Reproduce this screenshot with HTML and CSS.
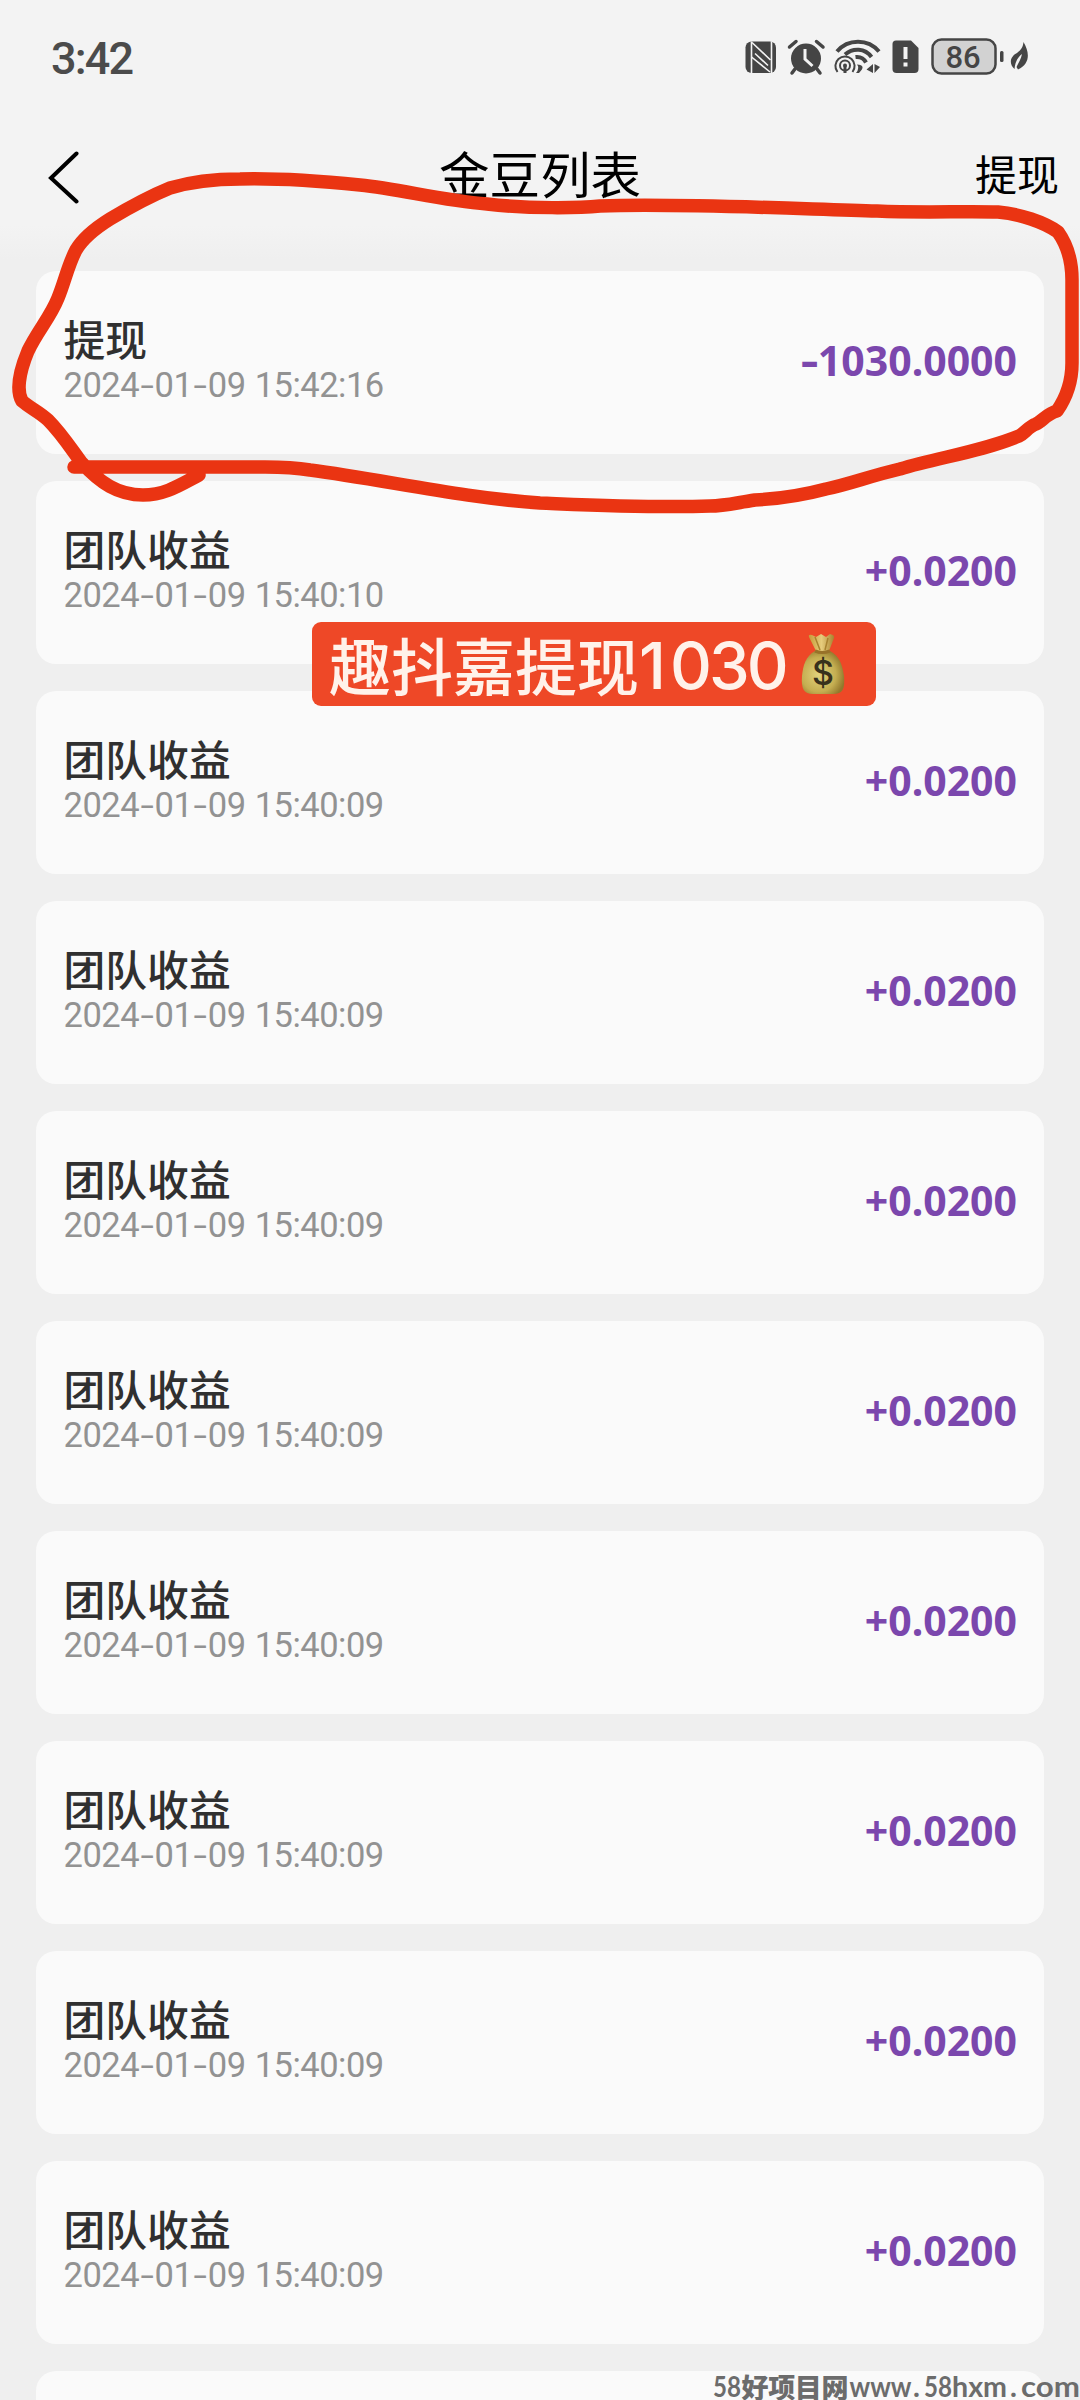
FILE: index.html
```html
<!DOCTYPE html>
<html lang="zh-CN">
<head>
<meta charset="utf-8">
<title>金豆列表</title>
<link rel="stylesheet" href="styles.css">
</head>
<body>
<main class="screen">
  <div class="status">
    <span class="time">3:42</span>
    <svg class="status-icons" viewBox="20 16 294 42" width="294" height="42" fill="none" stroke="#454545">
      <rect x="25.5" y="21.5" width="30.5" height="31.5" rx="6" fill="#454545" stroke="none"/>
      <path d="M31.500 53V21.500M51.500 53V21.500" stroke="#f3f3f3" stroke-width="1.600"/>
      <path d="M32 22.500L50.500 40M35 33.500L48 45.500M31.500 37L50 52" stroke="#f3f3f3" stroke-width="1.600"/>
      <circle cx="86" cy="38.500" r="15" fill="#454545" stroke="none"/>
      <path d="M69.500 27L76 21.500M96.500 21.500L103 27M75 49L72 53M97 49L100 53" stroke-width="3.500" stroke-linecap="round"/>
      <path d="M85 29V39L92.500 46" stroke="#f3f3f3" stroke-width="3"/>
      <g stroke-width="4">
        <path d="M117 31.500C128 18.500 148 18.500 159 31.500"/>
        <path d="M125 34.500C133 27.500 145 28 151.500 37"/>
        <path d="M135.500 37C140 36.500 144 38.500 146 42.500"/>
      </g>
      <circle cx="125" cy="45.500" r="5" stroke-width="2"/>
      <path d="M117.500 52A9.600 9.600 0 1 1 132.500 52" stroke-width="2"/>
      <circle cx="125" cy="45.500" r="2" fill="#454545" stroke="none"/>
      <path d="M125 46V53" stroke-width="3"/>
      <path d="M137 44.500Q147 45 139 53H136Q140 48 137 44.500ZM153 44V53L146.500 49.500ZM154.500 44V53L160 47Z" fill="#454545" stroke="none"/>
      <path d="M176 20.500H191L198.500 28V49Q198.500 53 194.500 53H176.500Q172.500 53 172.500 49V24Q172.500 20.500 176 20.500Z" fill="#454545" stroke="none"/>
      <path d="M185.500 27V39M185.500 42.500V46.500" stroke="#f3f3f3" stroke-width="4"/>
      <rect x="212.500" y="19.500" width="63" height="34" rx="9" fill="#d2d2d2" stroke-width="2.500"/>
      <text class="battery-text" x="243" y="48" text-anchor="middle">86</text>
      <rect x="280" y="31" width="3.500" height="11" rx="1.500" fill="#454545" stroke="none"/>
      <path d="M303.500 22C310 33 310 44 298 49.500L296.500 47C299 42 301 39 302 34C298 37 295 42 294.500 49C288 43 291 36 297 33C301 30 303 27 303.500 22Z" fill="#454545" stroke="none"/>
    </svg>
  </div>
  <header class="nav">
    <svg class="back" viewBox="0 0 32 54" width="32" height="54"><path d="M28.500 3.500L3 28L28.500 51.500" fill="none" stroke="#000" stroke-width="4" stroke-linecap="round"/></svg>
    <h1 class="title">金豆列表</h1>
    <span class="action">提现</span>
  </header>
  <section class="list">
    <article class="card"><div><h2 class="name">提现</h2><time class="date">2024<i>-</i>01<i>-</i>09 15:42:16</time></div><b class="amount"><i>-</i>1030.0000</b></article>
    <article class="card"><div><h2 class="name">团队收益</h2><time class="date">2024<i>-</i>01<i>-</i>09 15:40:10</time></div><b class="amount">+0.0200</b></article>
    <article class="card"><div><h2 class="name">团队收益</h2><time class="date">2024<i>-</i>01<i>-</i>09 15:40:09</time></div><b class="amount">+0.0200</b></article>
    <article class="card"><div><h2 class="name">团队收益</h2><time class="date">2024<i>-</i>01<i>-</i>09 15:40:09</time></div><b class="amount">+0.0200</b></article>
    <article class="card"><div><h2 class="name">团队收益</h2><time class="date">2024<i>-</i>01<i>-</i>09 15:40:09</time></div><b class="amount">+0.0200</b></article>
    <article class="card"><div><h2 class="name">团队收益</h2><time class="date">2024<i>-</i>01<i>-</i>09 15:40:09</time></div><b class="amount">+0.0200</b></article>
    <article class="card"><div><h2 class="name">团队收益</h2><time class="date">2024<i>-</i>01<i>-</i>09 15:40:09</time></div><b class="amount">+0.0200</b></article>
    <article class="card"><div><h2 class="name">团队收益</h2><time class="date">2024<i>-</i>01<i>-</i>09 15:40:09</time></div><b class="amount">+0.0200</b></article>
    <article class="card"><div><h2 class="name">团队收益</h2><time class="date">2024<i>-</i>01<i>-</i>09 15:40:09</time></div><b class="amount">+0.0200</b></article>
    <article class="card"><div><h2 class="name">团队收益</h2><time class="date">2024<i>-</i>01<i>-</i>09 15:40:09</time></div><b class="amount">+0.0200</b></article>
    <article class="card"></article>
  </section>

  <svg class="marker" viewBox="0 0 1080 520" width="1080" height="520">
    <path d="M199 475C180 485 165 495 143 495C118 495 100 483 81 462C70 447 61 433 48 420C38 411 30 408 22 401C17 392 18 375 28 351C38 330 50 318 58 298C65 281 68 265 76 250C83 238 94 229 110 219C130 207 148 197 170 188C190 182 215 179 240 179C280 178 320 181 360 185C400 189 440 200 487 204C530 209 580 208 600 206C680 203 800 209 877 211C920 213 965 211 998 212C1020 214 1044 222 1058 232C1068 246 1072 262 1072 280V363C1072 382 1066 398 1057 411C1048 413 1042 421 1036 424C1028 427 1025 433 1019 436C980 452 940 457 900 469C870 476 850 484 826 489C800 496 775 499 755 500C735 503 725 506 710 506C650 508 590 505 540 503C465 498 385 480 310 470C298 468 285 467 265 467H74"/>
  </svg>

  <div class="label">
    <span>趣抖嘉提现</span><span class="label-num"><span class="one">1</span>030</span>
    <svg class="bag" viewBox="0 0 44 62" width="44" height="62">
      <defs>
        <radialGradient id="gold" cx=".4" cy=".55" r=".62"><stop offset="0" stop-color="#e2d27c"/><stop offset=".65" stop-color="#c4ae51"/><stop offset="1" stop-color="#92782c"/></radialGradient>
        <linearGradient id="neck"><stop offset="0" stop-color="#c79b38"/><stop offset=".5" stop-color="#e6cc7c"/><stop offset="1" stop-color="#a9822e"/></linearGradient>
      </defs>
      <path d="M15 18L8 4Q7 1 11 2L15 4L20 1L25 4L29 1Q34 2 33 5L28 18Z" fill="url(#neck)"/>
      <path d="M14 4L19 17M27 5L24 17" stroke="#a8822f" stroke-width="1.500"/>
      <path d="M14 18C5 23 2 32 1 43C0 56 3 61 12 61H32C42 61 44 56 43 43C41 30 38 23 29 18Z" fill="url(#gold)"/>
      <path d="M14 18Q21 21 29 18" stroke="#987229" stroke-width="3" fill="none"/>
      <text class="dollar" x="22" y="52" text-anchor="middle">$</text>
    </svg>
  </div>

  <svg class="watermark" viewBox="0 0 368 29" width="368" height="29">
    <text x="1" y="26" textLength="28" lengthAdjust="spacingAndGlyphs">58</text>
    <text class="cjk" x="29.500" y="26.500" textLength="107">好项目网</text>
    <text x="137.500" y="26" textLength="62" lengthAdjust="spacingAndGlyphs">www</text>
    <text x="201" y="26">.</text>
    <text x="212" y="26" textLength="28" lengthAdjust="spacingAndGlyphs">58</text>
    <text x="240" y="26" textLength="55" lengthAdjust="spacingAndGlyphs">hxm</text>
    <text x="298" y="26">.</text>
    <text x="309" y="26" textLength="59" lengthAdjust="spacingAndGlyphs">com</text>
  </svg>
</main>
</body>
</html>
```
FILE: styles.css
```css
* { box-sizing: border-box; }
body { margin: 0; background: #efefef; font-family: "Noto Sans CJK SC", sans-serif; }
.screen { position: relative; width: 1080px; height: 2400px; overflow: hidden; background: linear-gradient(#f3f3f3 0, #f3f3f3 225px, #efefef 260px); }
.status { height: 116px; padding: 36px 46px 38px 51px; display: flex; justify-content: space-between; align-items: center; }
.time { padding-top: 3px; font: 500 45px/42px Roboto, sans-serif; letter-spacing: -1.800px; color: #4b4b4b; }
.status-icons { display: block; }
.battery-text { font: 500 31px Roboto, sans-serif; fill: #454545; stroke: none; }
.nav { height: 118px; padding: 0 21px 0 48px; display: grid; grid-template-columns: 180px 1fr 207px; align-items: center; }
.back { display: block; margin-top: 4px; }
.title { margin: 0; text-align: center; font-size: 50.500px; line-height: 76px; padding-bottom: 6px; font-weight: 400; color: #000; }
.action { text-align: right; font-size: 42px; line-height: 64px; padding-bottom: 5px; color: #000; }
.list { display: flex; flex-direction: column; gap: 27px; padding: 36.500px 36px 0; }
.card { flex: none; height: 183px; padding: 0 27px 0 27.500px; border-radius: 20px; background: #fafafa; display: flex; justify-content: space-between; align-items: center; }
.name { margin: -3px 0 0; font-size: 41.800px; line-height: 47px; font-weight: 500; color: #303030; }
.date { display: block; margin-top: 1px; font: 400 34.500px/44px Roboto, sans-serif; letter-spacing: -0.500px; word-spacing: 1px; color: #929292; }
.date i { display: inline-block; width: 15.500px; font-style: normal; text-align: center; transform: scaleX(1.400); }
.amount { padding-bottom: 4px; font: 700 41px/56px "Noto Sans", sans-serif; color: #7b47ad; }
.amount i { display: inline-block; width: 17px; font-style: normal; text-align: center; transform: scaleX(1.350); }
.marker { position: absolute; left: 0; top: 0; fill: none; stroke: #ea3412; stroke-width: 13.500px; stroke-linecap: round; stroke-linejoin: round; }
.label { position: absolute; left: 312px; top: 622px; width: 564px; height: 84px; padding-left: 17px; border-radius: 9px; background: #ee4827; color: #fff2ea; display: flex; align-items: center; font-size: 62px; font-weight: 500; line-height: 84px; white-space: nowrap; }
.label-num { width: 150px; padding-top: 4px; font-family: Inter, sans-serif; font-size: 65px; letter-spacing: -3px; }
.one { display: inline-block; width: 31px; }
.bag { margin-left: 12px; flex: none; }
.dollar { font: 500 34px Inter, sans-serif; fill: #38311c; }
.watermark { position: absolute; left: 712px; top: 2371px; fill: #6c6c6c; font: 700 29px Lato, sans-serif; }
.cjk { font: 900 27px "Noto Sans CJK SC", sans-serif; }
```
